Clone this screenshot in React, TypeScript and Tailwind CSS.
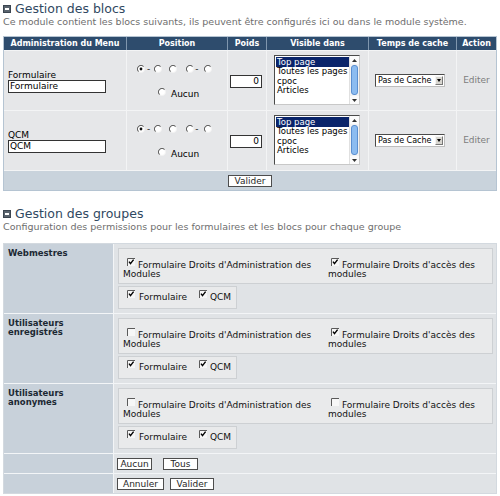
import React from "react";

function Toggle() {
  return (
    <div className="w-[8px] h-[8px] mt-[1px] bg-[#59636d] border border-[#3b4550] flex items-center justify-center shrink-0">
      <div className="w-[4px] h-[2px] bg-white" />
    </div>
  );
}

function Radio({ checked = false }: { checked?: boolean }) {
  return (
    <svg width="8" height="8" viewBox="0 0 8 8" className="block shrink-0">
      <circle cx="4" cy="4" r="3.5" fill="#ffffff" stroke="#f2f2f2" />
      <path d="M1.4 6.6 A3.6 3.6 0 0 1 6.6 1.4" stroke="#4a4a4a" strokeWidth="1" fill="none" />
      {checked && <circle cx="4" cy="4" r="1.4" fill="#111111" />}
    </svg>
  );
}

function Checkbox({ checked = false }: { checked?: boolean }) {
  return (
    <svg width="8" height="8" viewBox="0 0 8 8" className="block shrink-0">
      <rect x="0" y="0" width="8" height="8" fill="#f7f7f7" />
      <path d="M0.5 8V0.5H8" stroke="#5a5a5a" strokeWidth="1" fill="none" />
      {checked && <path d="M2 3.6 L3.5 5.6 L6.6 1.6" stroke="#000" strokeWidth="1.4" fill="none" />}
    </svg>
  );
}

function SectionTitle({ title, subtitle }: { title: string; subtitle: string }) {
  return (
    <>
      <div className="h-[17px] flex items-center gap-[4px] pl-[3px]">
        <Toggle />
        <span className="text-[12.5px] leading-[17px] text-[#2f4861] whitespace-nowrap">{title}</span>
      </div>
      <div className="pl-[3px] text-[9.5px] leading-[10px] text-[#6e6e6e] whitespace-nowrap">{subtitle}</div>
    </>
  );
}

function Listbox() {
  const items = ["Top page", "Toutes les pages", "cpoc", "Articles"];
  return (
    <div className="w-[86px] h-[50px] border border-[#4a4a4a] border-r-[#c8c8c8] border-b-[#c8c8c8] bg-white flex text-[8.5px]">
      <div className="flex-1 pt-[1px] pl-[1px]">
        {items.map((it, i) => (
          <div
            key={it}
            className={
              i === 0
                ? "h-[10px] leading-[10px] pl-[1px] bg-[#0a246a] text-white whitespace-nowrap"
                : "h-[9.5px] leading-[9.5px] pl-[1px] text-black whitespace-nowrap"
            }
          >
            {it}
          </div>
        ))}
      </div>
      <div className="w-[10px] flex flex-col bg-[#f3f3f3] border-l border-[#e0e0e0]">
        <div className="h-[8px] flex items-center justify-center bg-[#fbfbfb]">
          <svg width="5" height="3" viewBox="0 0 5 3"><path d="M0 3 L2.5 0 L5 3Z" fill="#333" /></svg>
        </div>
        <div className="flex-1 mx-[1px] my-[1px] rounded-[3px] bg-[#8cbcf0] border border-[#5b8fd0]" />
        <div className="h-[8px] flex items-center justify-center bg-[#fbfbfb]">
          <svg width="5" height="3" viewBox="0 0 5 3"><path d="M0 0 L2.5 3 L5 0Z" fill="#333" /></svg>
        </div>
      </div>
    </div>
  );
}

function Select() {
  return (
    <div className="w-[70px] h-[13px] border border-[#4a4a4a] border-r-[#bdbdbd] border-b-[#bdbdbd] bg-white flex items-center">
      <span className="flex-1 pl-[2px] text-[8px] leading-[11px] whitespace-nowrap overflow-hidden text-black">Pas de Cache</span>
      <div className="w-[8px] h-[9px] mr-[1px] bg-[#d8d6d0] border border-[#f4f4f4] border-r-[#777] border-b-[#777] flex items-center justify-center shrink-0">
        <svg width="4" height="3" viewBox="0 0 4 3"><path d="M0 0 L2 3 L4 0Z" fill="#000" /></svg>
      </div>
    </div>
  );
}

function BlocRow({ name }: { name: string }) {
  return (
    <div className="grid grid-cols-[122px_100px_38px_101px_87px_39px] gap-x-px h-[59px]">
      <div className="bg-[#e6e7e9] pl-[4px] pt-[20px]">
        <div className="leading-[9px] text-black">{name}</div>
        <div className="w-[98px] h-[13px] bg-white border border-[#333] flex items-center pl-[1px] leading-[11px] text-black whitespace-nowrap">{name}</div>
      </div>
      <div className="bg-[#e6e7e9] pt-[14px] flex flex-col">
        <div className="flex items-center h-[8px] pl-[10px] text-[#222]">
          <Radio checked />
          <span className="ml-[2px] leading-[8px]">-</span>
          <span className="ml-[4px]"><Radio /></span>
          <span className="ml-[7px]"><Radio /></span>
          <span className="ml-[9px]"><Radio /></span>
          <span className="ml-[1px] leading-[8px]">-</span>
          <span className="ml-[5px]"><Radio /></span>
        </div>
        <div className="flex items-start mt-[15px] pl-[31px]">
          <Radio />
          <span className="ml-[5px] mt-[2px] leading-[9px] text-black">Aucun</span>
        </div>
      </div>
      <div className="bg-[#e6e7e9] pl-[2px] pt-[24px]">
        <div className="w-[32px] h-[13px] bg-white border border-[#333] flex items-center justify-end pr-[2px] leading-[11px] text-black">0</div>
      </div>
      <div className="bg-[#e6e7e9] pl-[7px] pt-[4px]">
        <Listbox />
      </div>
      <div className="bg-[#e6e7e9] pl-[6px] pt-[23px]">
        <Select />
      </div>
      <div className="bg-[#e6e7e9] pt-[25px] flex justify-center">
        <span className="leading-[9px] text-[#7d7d7d]">Editer</span>
      </div>
    </div>
  );
}

function Btn({ label, w }: { label: string; w: string }) {
  return (
    <div className={`${w} h-[12px] bg-white border border-[#4d4d4d] flex items-center justify-center leading-[10px] text-[#262626]`}>
      {label}
    </div>
  );
}

function PermItem({ checked, first, second, ml }: { checked: boolean; first: string; second: string; ml: string }) {
  return (
    <div className="leading-[9px] text-[#111]">
      <div className="flex whitespace-nowrap">
        <span className={`${ml} mr-[3px] -mt-[3px]`}>
          <Checkbox checked={checked} />
        </span>
        <span>{first}</span>
      </div>
      <div className="whitespace-nowrap">{second}</div>
    </div>
  );
}

function GroupRow({ label, admin, access }: { label: React.ReactNode; admin: boolean; access: boolean }) {
  return (
    <div className="grid grid-cols-[109px_1fr] gap-x-px h-[69px]">
      <div className="bg-[#c8d1da] pl-[4px] pt-[5px] font-bold text-[8.5px] leading-[9px] text-[#1c2833]">{label}</div>
      <div className="bg-[#e0e3e6] pt-[4px] pl-[4px] pr-[3px] flex flex-col gap-[2px]">
        <div className="h-[36px] border border-[#cdd0d3] bg-[#e9eaeb] pt-[12px] pl-[4px] grid grid-cols-[205px_1fr]">
          <PermItem checked={admin} first="Formulaire Droits d'Administration des" second="Modules" ml="ml-[4px]" />
          <PermItem checked={access} first="Formulaire Droits d'accès des" second="modules" ml="ml-[3px]" />
        </div>
        <div className="w-[119px] h-[23px] border border-[#cdd0d3] bg-[#e9eaeb] pt-[6px] pl-[8px] flex items-start leading-[9px] text-[#111]">
          <div className="w-[72px] flex">
            <span className="mr-[4px] -mt-[3px]"><Checkbox checked /></span>
            <span>Formulaire</span>
          </div>
          <div className="flex">
            <span className="mr-[3px] -mt-[3px]"><Checkbox checked /></span>
            <span>QCM</span>
          </div>
        </div>
      </div>
    </div>
  );
}

export default function App() {
  return (
    <div className="w-[500px] h-[496px] bg-white font-['DejaVu_Sans',sans-serif] text-[9px] overflow-hidden">
      <SectionTitle
        title="Gestion des blocs"
        subtitle="Ce module contient les blocs suivants, ils peuvent être configurés ici ou dans le module système."
      />
      <div className="mt-[9px] ml-[3px] w-[494px] border border-[#b5c4d2] bg-[#f3f4f5] flex flex-col gap-px">
        <div className="grid grid-cols-[122px_100px_38px_101px_87px_39px] gap-x-px bg-[#7f96ae] h-[13px]">
          {["Administration du Menu", "Position", "Poids", "Visible dans", "Temps de cache", "Action"].map((h) => (
            <div key={h} className="bg-[#2e4c6d] text-white font-bold text-[8px] flex items-center justify-center whitespace-nowrap leading-[13px]">
              {h}
            </div>
          ))}
        </div>
        <BlocRow name="Formulaire" />
        <BlocRow name="QCM" />
        <div className="h-[19px] bg-[#c9d3dc] flex items-center justify-center">
          <Btn label="Valider" w="w-[44px]" />
        </div>
      </div>

      <div className="mt-[14px]">
        <SectionTitle
          title="Gestion des groupes"
          subtitle="Configuration des permissions pour les formulaires et les blocs pour chaque groupe"
        />
      </div>
      <div className="mt-[11px] ml-[3px] w-[494px] border border-[#d3d9df] bg-[#f3f5f7] flex flex-col gap-px">
        <GroupRow label="Webmestres" admin access />
        <GroupRow label={<>Utilisateurs<br />enregistrés</>} admin={false} access />
        <GroupRow label={<>Utilisateurs<br />anonymes</>} admin={false} access={false} />
        <div className="grid grid-cols-[109px_1fr] gap-x-px h-[19px]">
          <div className="bg-[#c8d1da]" />
          <div className="bg-[#e0e3e6] pl-[3px] flex items-center gap-[11px]">
            <Btn label="Aucun" w="w-[35px]" />
            <Btn label="Tous" w="w-[35px]" />
          </div>
        </div>
        <div className="grid grid-cols-[109px_1fr] gap-x-px h-[19px]">
          <div className="bg-[#c8d1da]" />
          <div className="bg-[#e0e3e6] pl-[3px] flex items-center gap-[6px]">
            <Btn label="Annuler" w="w-[47px]" />
            <Btn label="Valider" w="w-[44px]" />
          </div>
        </div>
      </div>
    </div>
  );
}
